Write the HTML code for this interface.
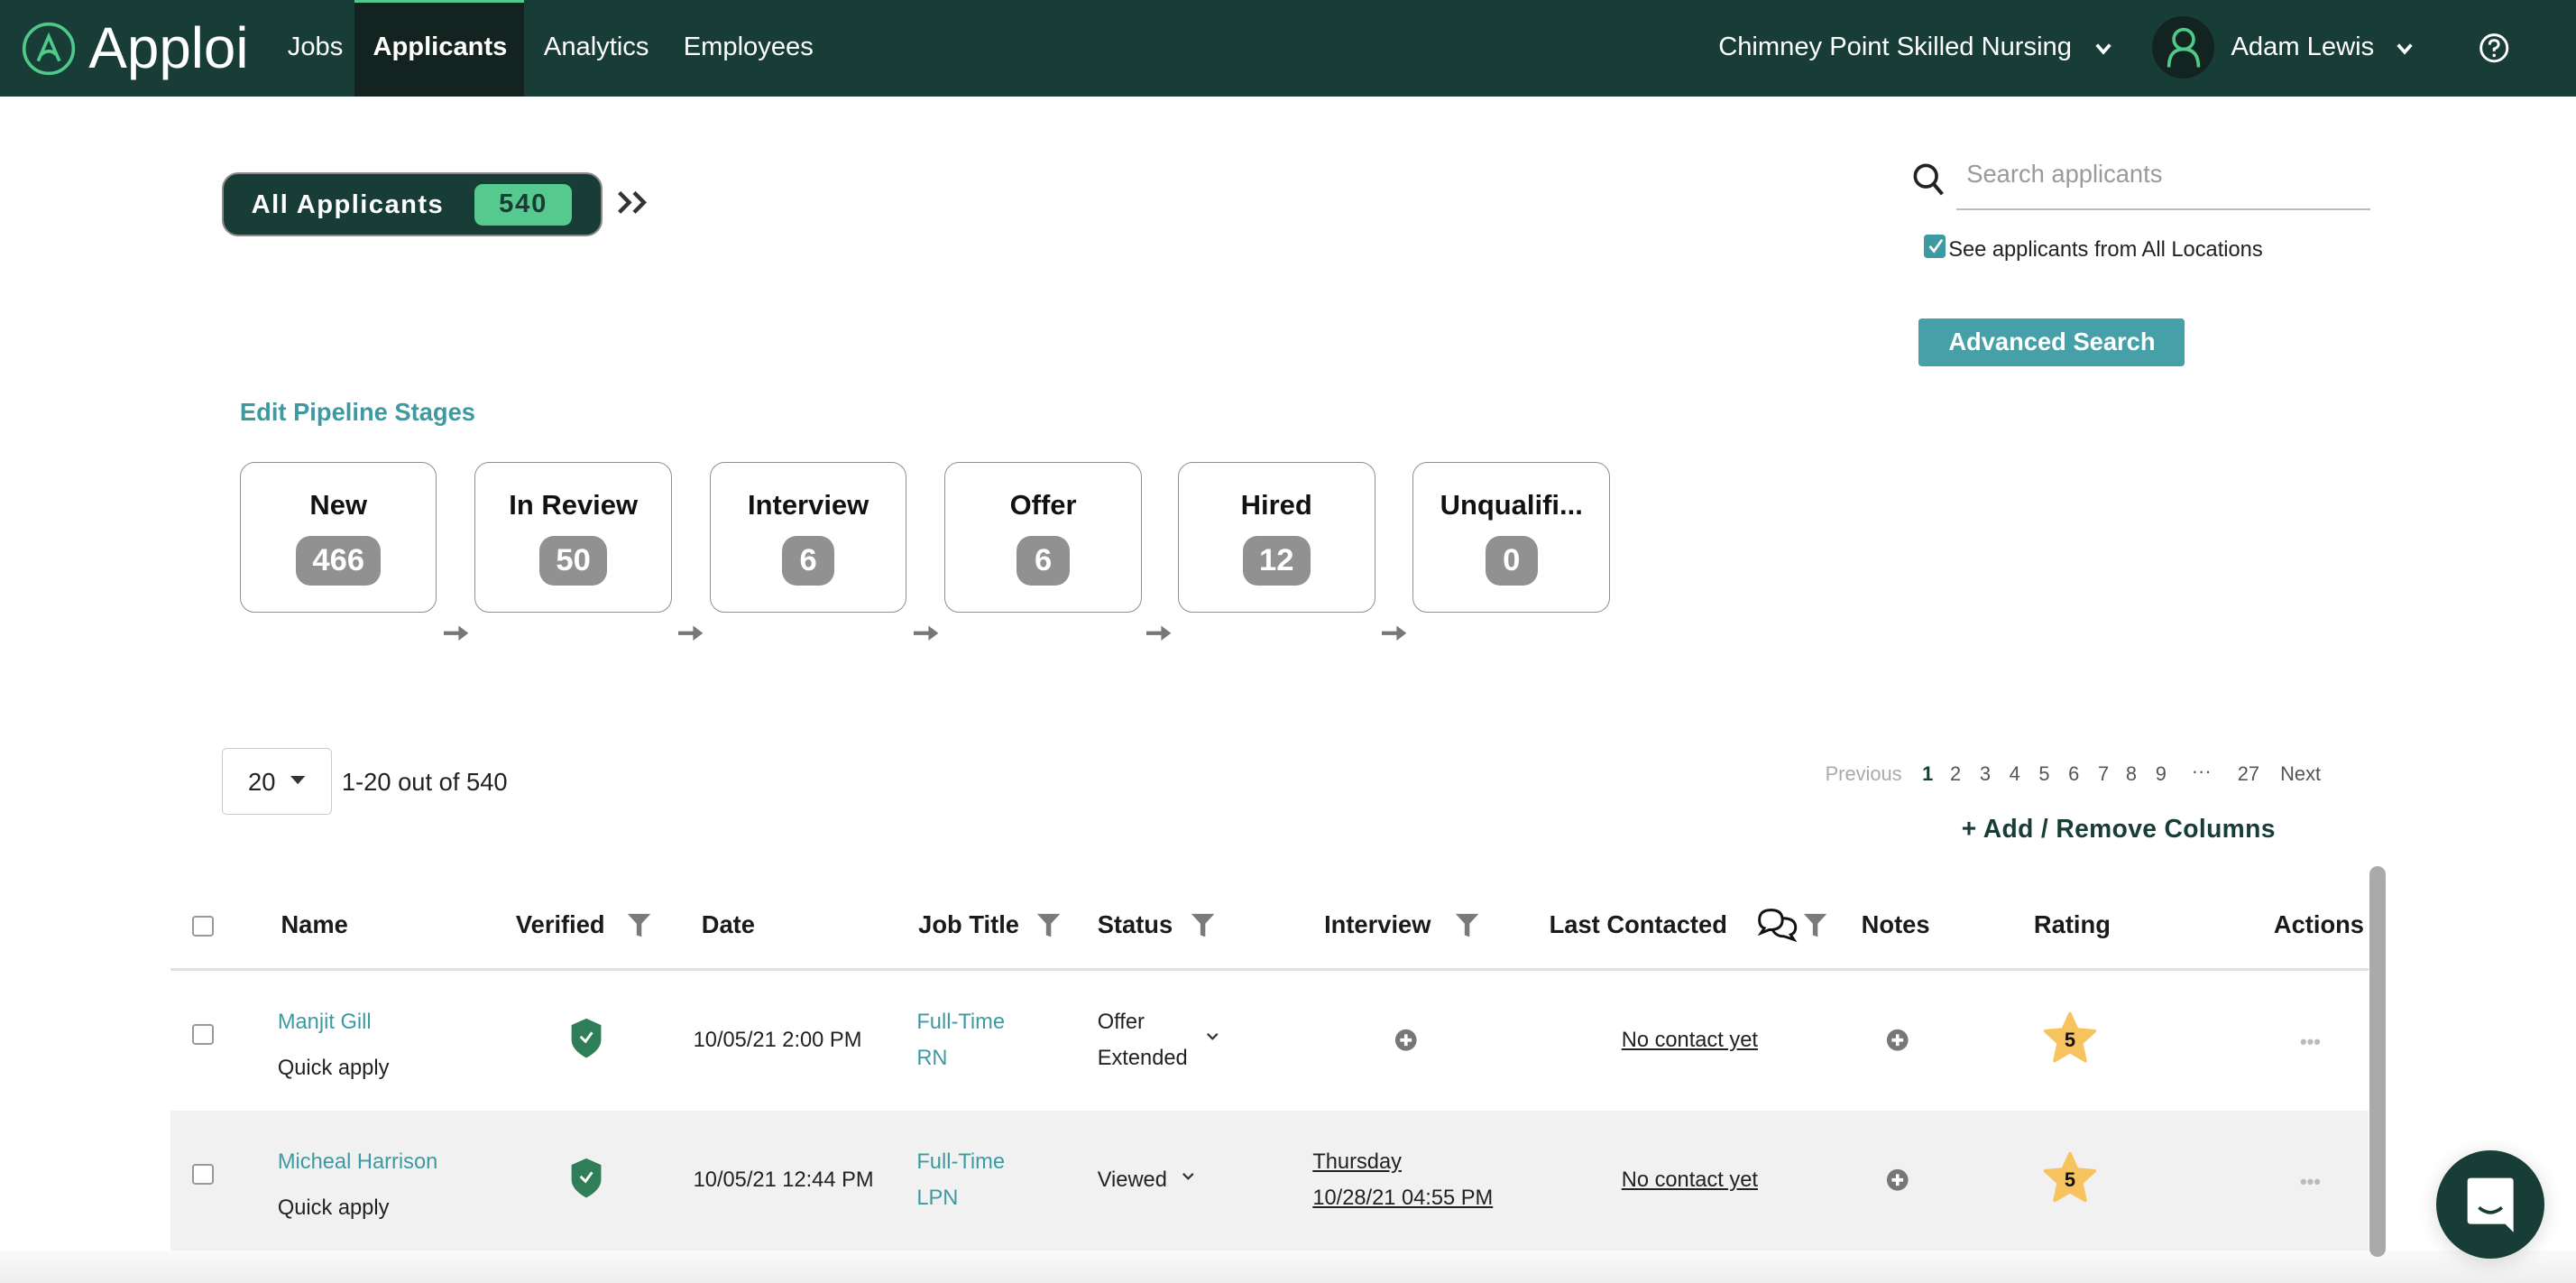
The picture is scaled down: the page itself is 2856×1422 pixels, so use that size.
<!DOCTYPE html>
<html><head><meta charset="utf-8"><style>
*{margin:0;padding:0;box-sizing:border-box}
html,body{width:2856px;height:1422px;overflow:hidden;background:#fff}
#w{zoom:1.82143;width:1568px;height:781px;position:relative;font-family:"Liberation Sans",sans-serif;color:#222;overflow:hidden}
.a{position:absolute;white-space:nowrap}
.nav{position:absolute;left:0;top:0;width:1568px;height:59px;background:#173d36}
.ni{position:absolute;top:20px;color:#fff;font-size:16px}
.stage{position:absolute;top:281px;width:120px;height:92px;border:1px solid #8f8f8f;border-radius:9px;text-align:center}
.stage .t{margin-top:16px;font-weight:bold;font-size:17px;color:#111}
.stage .b{display:inline-block;margin-top:9px;background:#919191;color:#fff;font-weight:bold;font-size:19px;border-radius:9px;height:30px;line-height:30px;padding:0 10px;min-width:32px}
.arr{position:absolute;top:378px;width:16px;height:14px}
.th{position:absolute;top:554px;font-weight:bold;font-size:15px;color:#1a1a1a}
.cb{position:absolute;width:13px;height:13px;border:1.5px solid #999;border-radius:2px;background:#fff}
.td{position:absolute;font-size:13px;color:#222;white-space:nowrap}
.tl{color:#3d9aa2}
.u{text-decoration:underline}
.pg{position:absolute;top:464px;font-size:12px;color:#555}
</style></head><body><div id="w">
<div class="nav"></div>
<div class="a" style="left:216px;top:0;width:103px;height:59px;background:#13231f;border-top:2px solid #4fc98a"></div>
<svg class="a" style="left:13px;top:13px" width="33" height="33" viewBox="0 0 33 33"><circle cx="16.5" cy="16.5" r="15" fill="none" stroke="#4fc98a" stroke-width="2"/><path d="M10 24 L16.5 9 L23 24 M12 20 Q16.5 16 21 20" fill="none" stroke="#4fc98a" stroke-width="2"/></svg>
<div class="a" style="left:54px;top:9px;color:#fff;font-size:35px">Apploi</div>
<div class="ni" style="left:175px">Jobs</div>
<div class="ni" style="left:227px;font-weight:bold">Applicants</div>
<div class="ni" style="left:331px">Analytics</div>
<div class="ni" style="left:416px">Employees</div>
<div class="ni" style="left:1046px">Chimney Point Skilled Nursing</div>
<svg class="a" style="left:1275px;top:25px" width="11" height="9"><path d="M1.5 2 L5.5 6.5 L9.5 2" fill="none" stroke="#fff" stroke-width="2"/></svg>
<div class="a" style="left:1310px;top:10px;width:38px;height:38px;border-radius:50%;background:#13231f"></div>
<svg class="a" style="left:1318px;top:16px" width="22" height="26"><circle cx="11" cy="8" r="6" fill="none" stroke="#4fc98a" stroke-width="2"/><path d="M2 25 Q2 14 11 14 Q20 14 20 25" fill="none" stroke="#4fc98a" stroke-width="2"/></svg>
<div class="ni" style="left:1358px">Adam Lewis</div>
<svg class="a" style="left:1458px;top:25px" width="11" height="9"><path d="M1.5 2 L5.5 6.5 L9.5 2" fill="none" stroke="#fff" stroke-width="2"/></svg>
<svg class="a" style="left:1508px;top:19px" width="20" height="20"><circle cx="10" cy="10" r="8" fill="none" stroke="#fff" stroke-width="1.6"/><path d="M7.3 8 Q7.3 5.3 10 5.3 Q12.7 5.3 12.7 7.8 Q12.7 9.5 10 10.5 L10 12" fill="none" stroke="#fff" stroke-width="1.6"/><circle cx="10" cy="14.5" r="1" fill="#fff"/></svg>

<div class="a" style="left:135px;top:105px;width:232px;height:39px;background:#173d36;border:1.5px solid #8a8a8a;border-radius:10px"></div>
<div class="a" style="left:153px;top:116px;color:#fff;font-weight:bold;font-size:16px;letter-spacing:.8px">All Applicants</div>
<div class="a" style="left:289px;top:112px;width:59px;height:25px;background:#55c98e;border-radius:5px;color:#173d36;font-weight:bold;font-size:16px;text-align:center;line-height:25px;letter-spacing:1px">540</div>
<svg class="a" style="left:375px;top:114px" width="24" height="18"><path d="M2 3 L8 9 L2 15 M11 3 L17 9 L11 15" fill="none" stroke="#333" stroke-width="2.4"/></svg>

<svg class="a" style="left:1162px;top:97px" width="24" height="24"><circle cx="10" cy="10" r="6.5" fill="none" stroke="#222" stroke-width="2"/><path d="M14.5 14.5 L20 21" stroke="#222" stroke-width="2.2"/></svg>
<div class="a" style="left:1197px;top:97px;font-size:15px;color:#9a9a9a">Search applicants</div>
<div class="a" style="left:1191px;top:127px;width:252px;height:1px;background:#bbb"></div>
<div class="a" style="left:1171px;top:143px;width:13px;height:14px;background:#3d9aa2;border-radius:2px"></div>
<svg class="a" style="left:1172px;top:144px" width="12" height="12"><path d="M2.5 6 L5 9 L10 2" fill="none" stroke="#fff" stroke-width="1.5"/></svg>
<div class="a" style="left:1186px;top:145px;font-size:13px;color:#222">See applicants from All Locations</div>
<div class="a" style="left:1168px;top:194px;width:162px;height:29px;background:#45a0a8;border-radius:2px;color:#fff;font-weight:bold;font-size:15px;text-align:center;line-height:29px">Advanced Search</div>

<div class="a" style="left:146px;top:242px;color:#3d9aa2;font-weight:bold;font-size:15px">Edit Pipeline Stages</div>
<div class="stage" style="left:146px"><div class="t">New</div><div class="b">466</div></div>
<div class="stage" style="left:289px"><div class="t">In Review</div><div class="b">50</div></div>
<div class="stage" style="left:432px"><div class="t">Interview</div><div class="b">6</div></div>
<div class="stage" style="left:575px"><div class="t">Offer</div><div class="b">6</div></div>
<div class="stage" style="left:717px"><div class="t">Hired</div><div class="b">12</div></div>
<div class="stage" style="left:860px"><div class="t">Unqualifi...</div><div class="b">0</div></div>
<svg class="arr" style="left:270px" viewBox="0 0 16 14"><path d="M0 7 H10" stroke="#777" stroke-width="2.4"/><path d="M9 2.5 L15 7 L9 11.5Z" fill="#777"/></svg>
<svg class="arr" style="left:413px" viewBox="0 0 16 14"><path d="M0 7 H10" stroke="#777" stroke-width="2.4"/><path d="M9 2.5 L15 7 L9 11.5Z" fill="#777"/></svg>
<svg class="arr" style="left:556px" viewBox="0 0 16 14"><path d="M0 7 H10" stroke="#777" stroke-width="2.4"/><path d="M9 2.5 L15 7 L9 11.5Z" fill="#777"/></svg>
<svg class="arr" style="left:698px" viewBox="0 0 16 14"><path d="M0 7 H10" stroke="#777" stroke-width="2.4"/><path d="M9 2.5 L15 7 L9 11.5Z" fill="#777"/></svg>
<svg class="arr" style="left:841px" viewBox="0 0 16 14"><path d="M0 7 H10" stroke="#777" stroke-width="2.4"/><path d="M9 2.5 L15 7 L9 11.5Z" fill="#777"/></svg>

<div class="a" style="left:135px;top:455px;width:67px;height:41px;border:1px solid #ccc;border-radius:3px"></div>
<div class="a" style="left:151px;top:467px;font-size:15px">20</div>
<svg class="a" style="left:177px;top:472px" width="9" height="6"><path d="M0 0 L9 0 L4.5 5Z" fill="#333"/></svg>
<div class="a" style="left:208px;top:467px;font-size:15px">1-20 out of 540</div>
<div class="pg" style="left:1111px;color:#aaa">Previous</div>
<div class="pg" style="left:1170px;color:#173d36;font-weight:bold">1</div>
<div class="pg" style="left:1187px">2</div>
<div class="pg" style="left:1205px">3</div>
<div class="pg" style="left:1223px">4</div>
<div class="pg" style="left:1241px">5</div>
<div class="pg" style="left:1259px">6</div>
<div class="pg" style="left:1277px">7</div>
<div class="pg" style="left:1294px">8</div>
<div class="pg" style="left:1312px">9</div>
<div class="pg" style="left:1334px;top:462px">···</div>
<div class="pg" style="left:1362px">27</div>
<div class="pg" style="left:1388px">Next</div>
<div class="a" style="left:1194px;top:495px;font-size:15.5px;font-weight:bold;color:#173d36;letter-spacing:.2px">+ Add / Remove Columns</div>

<div class="cb" style="left:117px;top:557px"></div>
<div class="th" style="left:171px">Name</div>
<div class="th" style="left:314px">Verified</div>
<div class="th" style="left:427px">Date</div>
<div class="th" style="left:559px">Job Title</div>
<div class="th" style="left:668px">Status</div>
<div class="th" style="left:806px">Interview</div>
<div class="th" style="left:943px">Last Contacted</div>
<div class="th" style="left:1133px">Notes</div>
<div class="th" style="left:1238px">Rating</div>
<div class="th" style="left:1384px">Actions</div>
<svg class="a" style="left:381px;top:555px" width="16" height="16"><path d="M1 1 H15 L9.5 7 V15 L6.5 14 V7Z" fill="#7a7a7a"/></svg>
<svg class="a" style="left:630px;top:555px" width="16" height="16"><path d="M1 1 H15 L9.5 7 V15 L6.5 14 V7Z" fill="#7a7a7a"/></svg>
<svg class="a" style="left:724px;top:555px" width="16" height="16"><path d="M1 1 H15 L9.5 7 V15 L6.5 14 V7Z" fill="#7a7a7a"/></svg>
<svg class="a" style="left:885px;top:555px" width="16" height="16"><path d="M1 1 H15 L9.5 7 V15 L6.5 14 V7Z" fill="#7a7a7a"/></svg>
<svg class="a" style="left:1097px;top:555px" width="16" height="16"><path d="M1 1 H15 L9.5 7 V15 L6.5 14 V7Z" fill="#7a7a7a"/></svg>
<svg class="a" style="left:1069px;top:552px" width="28" height="22"><path d="M9 2 Q2 2 2 8 Q2 12 5 13 L3 16 L8 14 Q16 14 16 8 Q16 2 9 2Z" fill="none" stroke="#111" stroke-width="1.6"/><path d="M16 7 Q24 7 24 12.5 Q24 16 21 17 L23 20 L17 18 Q12 18 10 14" fill="none" stroke="#111" stroke-width="1.6"/></svg>
<div class="a" style="left:104px;top:589px;width:1338px;height:2px;background:#e0e0e0"></div>

<div class="a" style="left:104px;top:676px;width:1338px;height:85px;background:#f1f1f1"></div>
<div class="a" style="left:0;top:761px;width:1568px;height:20px;background:linear-gradient(#fafafa,#eee)"></div>
<div class="a" style="left:1442px;top:527px;width:10px;height:238px;background:#aaa;border-radius:5px"></div>

<div class="cb" style="left:117px;top:623px"></div>
<div class="td tl" style="left:169px;top:615px">Manjit Gill</div>
<div class="td" style="left:169px;top:643px">Quick apply</div>
<svg class="a" style="left:346px;top:619px" width="22" height="26"><path d="M11 1 L20 5 V14 Q20 20 11 25 Q2 20 2 14 V5Z" fill="#2f7e57"/><path d="M7.5 12 L10.5 15 L14.5 9.5" fill="none" stroke="#fff" stroke-width="1.6"/></svg>
<div class="td" style="left:422px;top:626px">10/05/21 2:00 PM</div>
<div class="td tl" style="left:558px;top:615px">Full-Time</div>
<div class="td tl" style="left:558px;top:637px">RN</div>
<div class="td" style="left:668px;top:615px">Offer</div>
<div class="td" style="left:668px;top:637px">Extended</div>
<svg class="a" style="left:734px;top:628px" width="8" height="6"><path d="M1 1 L4 4 L7 1" fill="none" stroke="#333" stroke-width="1.2"/></svg>
<svg class="a" style="left:849px;top:626px" width="14" height="14"><circle cx="7" cy="7" r="6.5" fill="#777"/><path d="M7 3.5 V10.5 M3.5 7 H10.5" stroke="#fff" stroke-width="2"/></svg>
<div class="td u" style="left:987px;top:626px">No contact yet</div>
<svg class="a" style="left:1148px;top:626px" width="14" height="14"><circle cx="7" cy="7" r="6.5" fill="#777"/><path d="M7 3.5 V10.5 M3.5 7 H10.5" stroke="#fff" stroke-width="2"/></svg>
<svg class="a" style="left:1243px;top:615px" width="34" height="34" viewBox="0 0 34 34"><path d="M17 2 L21.3 11.5 L32 12.5 L24 19.8 L26.3 30.5 L17 25 L7.7 30.5 L10 19.8 L2 12.5 L12.7 11.5Z" fill="#f7c35f" stroke="#f7c35f" stroke-width="2" stroke-linejoin="round"/><text x="17" y="22" text-anchor="middle" font-family="Liberation Sans" font-weight="bold" font-size="12" fill="#111">5</text></svg>
<div class="td" style="left:1400px;top:627px;color:#bbb;font-size:12px;font-weight:bold">•••</div>

<div class="cb" style="left:117px;top:708px"></div>
<div class="td tl" style="left:169px;top:700px">Micheal Harrison</div>
<div class="td" style="left:169px;top:728px">Quick apply</div>
<svg class="a" style="left:346px;top:704px" width="22" height="26"><path d="M11 1 L20 5 V14 Q20 20 11 25 Q2 20 2 14 V5Z" fill="#2f7e57"/><path d="M7.5 12 L10.5 15 L14.5 9.5" fill="none" stroke="#fff" stroke-width="1.6"/></svg>
<div class="td" style="left:422px;top:711px">10/05/21 12:44 PM</div>
<div class="td tl" style="left:558px;top:700px">Full-Time</div>
<div class="td tl" style="left:558px;top:722px">LPN</div>
<div class="td" style="left:668px;top:711px">Viewed</div>
<svg class="a" style="left:719px;top:713px" width="8" height="6"><path d="M1 1 L4 4 L7 1" fill="none" stroke="#333" stroke-width="1.2"/></svg>
<div class="td u" style="left:799px;top:700px">Thursday</div>
<div class="td u" style="left:799px;top:722px">10/28/21 04:55 PM</div>
<div class="td u" style="left:987px;top:711px">No contact yet</div>
<svg class="a" style="left:1148px;top:711px" width="14" height="14"><circle cx="7" cy="7" r="6.5" fill="#777"/><path d="M7 3.5 V10.5 M3.5 7 H10.5" stroke="#fff" stroke-width="2"/></svg>
<svg class="a" style="left:1243px;top:700px" width="34" height="34" viewBox="0 0 34 34"><path d="M17 2 L21.3 11.5 L32 12.5 L24 19.8 L26.3 30.5 L17 25 L7.7 30.5 L10 19.8 L2 12.5 L12.7 11.5Z" fill="#f7c35f" stroke="#f7c35f" stroke-width="2" stroke-linejoin="round"/><text x="17" y="22" text-anchor="middle" font-family="Liberation Sans" font-weight="bold" font-size="12" fill="#111">5</text></svg>
<div class="td" style="left:1400px;top:712px;color:#bbb;font-size:12px;font-weight:bold">•••</div>

<div class="a" style="left:1483px;top:700px;width:66px;height:66px;border-radius:50%;background:#173d36;box-shadow:0 2px 12px rgba(0,0,0,.15)"></div>
<svg class="a" style="left:1500px;top:715px" width="32" height="38"><path d="M4 2 H28 Q30 2 30 4 V35 L25 30 H4 Q2 30 2 28 V4 Q2 2 4 2Z" fill="#fff"/><path d="M9 20 Q16 26 23 20" fill="none" stroke="#173d36" stroke-width="2"/></svg>
</div></body></html>
